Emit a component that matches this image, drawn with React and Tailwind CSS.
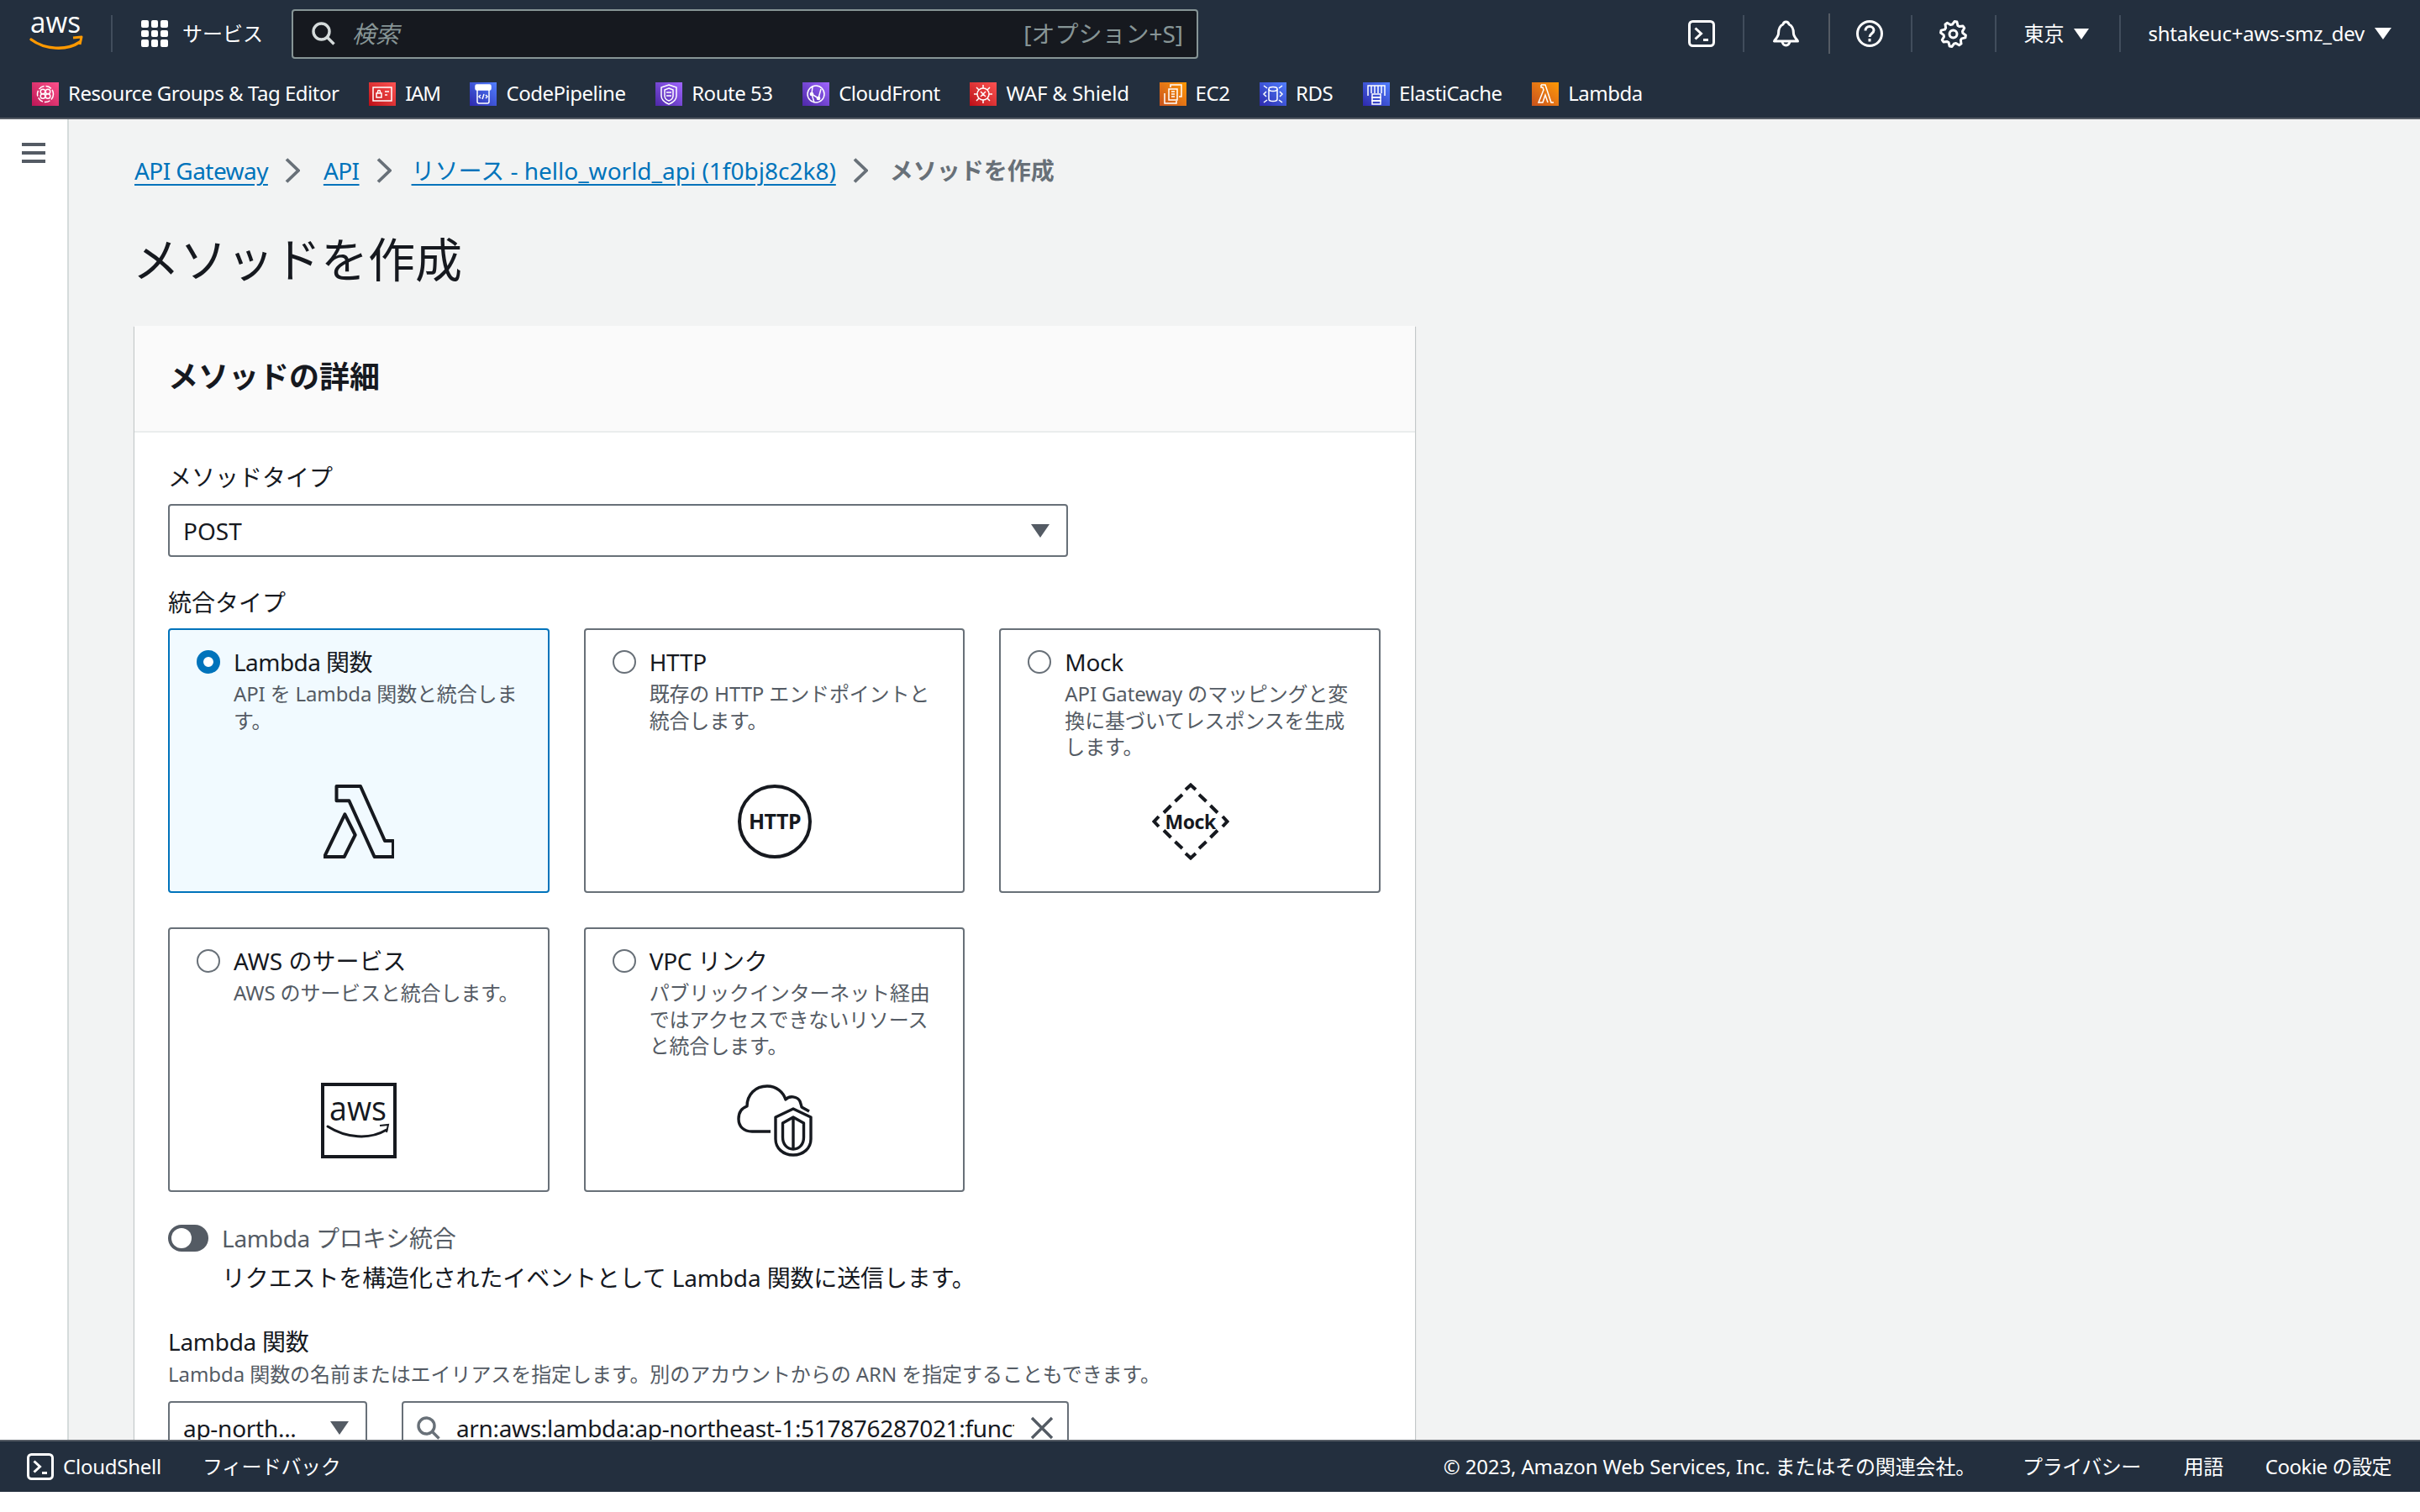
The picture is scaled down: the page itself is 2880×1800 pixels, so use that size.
const favorites = [
    { name: 'Resource Groups & Tag Editor', bg: 'from-[#bc1356] to-[#ff4f8b]', art: <><circle cx="16" cy="14" r="9.5" strokeDasharray="7 2" /><circle cx="13" cy="11" r="2.8" /><circle cx="19" cy="11" r="2.8" /><circle cx="13" cy="16.5" r="2.8" /><circle cx="19" cy="16.5" r="2.8" /></> },
    { name: 'IAM', tw: 'tracking-[-0.05em]', bg: 'from-[#bd0816] to-[#ff5252]', art: <><rect x="5" y="6" width="22" height="16" /><rect x="9" y="13" width="6" height="5" /><path d="M10.5 13v-2a1.5 1.5 0 0 1 3 0v2M19 11h5M19 15h3" /></> },
    { name: 'CodePipeline', bg: 'from-[#2e27ad] to-[#527fff]', art: <><rect x="7" y="3" width="18" height="6" rx="1.5" fill="#fff" /><path d="M9 9v14a2 2 0 0 0 2 2h10a2 2 0 0 0 2-2V9M13 15l-2 2 2 2M19 15l2 2-2 2M17 14l-2 6" /></> },
    { name: 'Route 53', bg: 'from-[#4d27a8] to-[#a166ff]', art: <><path d="M16 3l9 3v10c0 5-4 8-9 10-5-2-9-5-9-10V6z" /><path d="M16 7l5 2v7c0 3-2 5-5 6-3-1-5-3-5-6V9z" /><path d="M13 12h6M13 16h6" /></> },
    { name: 'CloudFront', bg: 'from-[#4d27a8] to-[#a166ff]', art: <><circle cx="16" cy="14" r="10" /><path d="M12 5l-1 9 8 5 3-11M11 14l3 10" /><circle cx="19" cy="19" r="1.6" fill="#fff" /><circle cx="11" cy="14" r="1.6" fill="#fff" /></> },
    { name: 'WAF & Shield', tw: 'tracking-[-0.005em]', bg: 'from-[#bd0816] to-[#ff5252]', art: <><circle cx="16" cy="14" r="7" /><path d="M16 3v4M16 21v4M5 14h4M23 14h4M8 6l3 3M24 6l-3 3M8 22l3-3M24 22l-3-3M13 11l6 6M19 11l-6 6" /></> },
    { name: 'EC2', bg: 'from-[#c8511b] to-[#ff9900]', art: <><path d="M13 6V3h13v14h-3M6 13v12h14v-3" /><rect x="11" y="8" width="10" height="13" /><path d="M14 11h4M14 14h4M14 17h4" /></> },
    { name: 'RDS', bg: 'from-[#2e27ad] to-[#527fff]', art: <><ellipse cx="16" cy="8" rx="5" ry="2.5" /><path d="M11 8v12c0 1.4 2.2 2.5 5 2.5s5-1.1 5-2.5V8M5 4l4 3M27 4l-4 3M5 24l4-3M27 24l-4-3M8 11l-3 3 3 3M24 11l3 3-3 3" /></> },
    { name: 'ElastiCache', bg: 'from-[#2e27ad] to-[#527fff]', art: <><path d="M6 16V4h20v12M10 4v9M14 4v9M18 4v9M22 4v9" /><rect x="11" y="14" width="10" height="4" /><rect x="11" y="18" width="10" height="4" /><rect x="11" y="22" width="10" height="4" /></> },
    { name: 'Lambda', bg: 'from-[#c8511b] to-[#ff9900]', art: <path d="M11 3h5l7 21h3M11 3v3h2l1 3-6 15h5l3-9 3 9" /> },
];

function Favorite({ name, bg, art, tw = 'tracking-[-0.02em]' }) {
    return (
        <div className="flex items-center gap-[11px]">
            <span className={`w-[32px] h-[28px] flex items-center justify-center bg-linear-to-tr ${bg}`}>
                <svg viewBox="0 0 32 28" className="w-[32px] h-[28px]" fill="none" stroke="#fff" strokeWidth="1.5">{art}</svg>
            </span>
            <span className={`-mt-[3px] text-[24px] leading-[32px] text-white whitespace-nowrap ${tw}`}>{name}</span>
        </div>
    );
}

function AwsLogo() {
    return (
        <svg viewBox="0 0 64 40" className="w-[64px] h-[40px] overflow-visible">
            <text x="31" y="19" textAnchor="middle" fill="#fff" className="text-[35px] font-['Open_Sans',sans-serif]" textLength="60" lengthAdjust="spacingAndGlyphs">aws</text>
            <path d="M2 27c16 12 42 14 58 3" fill="none" stroke="#ff9900" strokeWidth="3.4" strokeLinecap="round" />
            <path d="M52 25l10-1-2 9" fill="none" stroke="#ff9900" strokeWidth="3" strokeLinejoin="round" />
        </svg>
    );
}

function ConsoleIcon() {
    return (
        <svg viewBox="0 0 32 32" className="w-[32px] h-[32px]" fill="none" stroke="#fff" strokeWidth="3">
            <rect x="1.500" y="1.500" width="29" height="29" rx="4" />
            <path d="M8.500 9.500l7 6.500-7 6.500M18 23.500h6" />
        </svg>
    );
}

// eight rounded teeth, same as the console's gear
const gearPoints = Array.from({ length: 32 }, (_, i) => {
    const a = ((i - 0.5) * Math.PI) / 16 + Math.PI / 16;
    const r = i % 4 === 0 || i % 4 === 1 ? 15 : 11.5;
    return `${(16.5 + r * Math.cos(a)).toFixed(1)},${(16.5 + r * Math.sin(a)).toFixed(1)}`;
}).join(' ');

const GearIcon = () => (
    <svg viewBox="0 0 33 33" className="w-[33px] h-[33px]" fill="none" stroke="#fff" strokeWidth="3" strokeLinejoin="round">
        <polygon points={gearPoints} />
        <circle cx="16.500" cy="16.500" r="4.500" />
    </svg>
);

const Sep = ({ strong }) => <span className={`block w-[2px] ${strong ? 'h-[48px] bg-[#545b64]' : 'h-[44px] bg-[#414d5c]'}`} />;

const Caret = ({ className }) => (
    <svg viewBox="0 0 22 16" preserveAspectRatio="none" className={className}><path d="M0 0h22L11 16z" fill="currentColor" /></svg>
);

const SearchIcon = ({ className }) => (
    <svg viewBox="0 0 28 28" className={className} fill="none" stroke="currentColor" strokeWidth="3.400">
        <circle cx="11.500" cy="11.500" r="9.500" />
        <path d="M18 18l8.500 8.500" />
    </svg>
);

const Crumb = ({ className = 'mr-[22px]' }) => (
    <svg viewBox="0 0 18 30" className={`w-[18px] h-[30px] shrink-0 ml-[20px] ${className}`} fill="none" stroke="#687078" strokeWidth="3.800">
        <path d="M2 1.500L16 15 2 28.500" />
    </svg>
);

function Radio({ checked }) {
    return checked ? (
        <span className="w-[28px] h-[28px] rounded-full border-[8px] border-[#0073bb] bg-white shrink-0" />
    ) : (
        <span className="w-[28px] h-[28px] rounded-full border-[2px] border-[#687078] bg-white shrink-0" />
    );
}

const LambdaArt = () => (
    <svg viewBox="0 0 84 88" className="w-[84px] h-[88px]" fill="none" stroke="#16191f" strokeWidth="4" strokeLinejoin="round">
        <path d="M15.500 2H44L73 67h10v19H60.600L30.400 19.300H15.500z" />
        <path d="M25.400 35.300L37.700 60 24.700 86H1z" />
    </svg>
);

const HttpArt = () => (
    <div className="w-[88px] h-[88px] rounded-full border-[4px] border-[#16191f] flex items-center justify-center text-[25px] tracking-[-0.02em] font-bold text-[#16191f]">HTTP</div>
);

const MockArt = () => (
    <div className="relative w-[92px] h-[92px] flex items-center justify-center text-[23px] tracking-[-0.02em] font-bold text-[#16191f]">
        <svg viewBox="0 0 92 92" className="absolute inset-0 w-[92px] h-[92px]" fill="none" stroke="#16191f" strokeWidth="4">
            <path d="M40 8l6-5.500L52 8M40 84l6 5.500L52 84M8 40l-5.500 6L8 52M84 40l5.500 6L84 52" />
            <path d="M27.500 22L36 14M14 35.500L22.500 27M64.500 22L56 14M78 35.500L69.500 27" />
            <path d="M27.500 70L36 78M14 56.500L22.500 65M64.500 70L56 78M78 56.500L69.500 65" />
        </svg>
        <span className="relative">Mock</span>
    </div>
);

const AwsArt = () => (
    <div className="w-[90px] h-[90px] border-[4px] border-[#16191f] flex flex-col items-center">
        <svg viewBox="0 0 82 82" className="w-[82px] h-[82px] overflow-visible">
            <text x="40" y="41" textAnchor="middle" fill="#16191f" className="text-[41px] font-['Open_Sans',sans-serif]" textLength="68" lengthAdjust="spacingAndGlyphs">aws</text>
            <path d="M4 48c22 14 50 16 70 4" fill="none" stroke="#16191f" strokeWidth="3" strokeLinecap="round" />
            <path d="M66 47l10-1-2 9" fill="none" stroke="#16191f" strokeWidth="2" />
        </svg>
    </div>
);

const VpcArt = () => (
    <svg viewBox="0 0 90 86" className="w-[90px] h-[86px]" fill="none" stroke="#16191f" strokeWidth="3.400" strokeLinejoin="round">
        <path d="M40 56H18C8 56 2 50 2 41c0-8 4-13 10-15C12 12 22 2 36 2c11 0 19 7 22 16 4-5 14-4 17 2 1 3 2 6 2 7l9 5" />
        <path d="M67 29l21 10v26c0 11-9 19-21 19s-21-8-21-19V39z" fill="#fff" />
        <path d="M67 39l12.500 7v17c0 8-5 14-12.500 14S54.500 71 54.500 63V46zM67 39v38" />
    </svg>
);

const integrations = [
    { title: 'Lambda 関数', tw: 'tracking-[-0.02em]', desc: 'API を Lambda 関数と統合します。', art: <LambdaArt />, checked: true },
    { title: 'HTTP', desc: '既存の HTTP エンドポイントと統合します。', art: <HttpArt /> },
    { title: 'Mock', desc: 'API Gateway のマッピングと変換に基づいてレスポンスを生成します。', art: <MockArt /> },
    { title: 'AWS のサービス', tw: 'tracking-normal', desc: 'AWS のサービスと統合します。', art: <AwsArt /> },
    { title: 'VPC リンク', desc: 'パブリックインターネット経由ではアクセスできないリソースと統合します。', art: <VpcArt /> },
];

function IntegrationCard({ title, desc, art, checked, tw = 'tracking-[-0.01em]' }) {
    return (
        <div className={`h-[315px] rounded-[4px] border-[2px] pt-[24px] pl-[32px] pr-[24px] flex flex-col ${checked ? 'border-[#0073bb] bg-[#f1faff]' : 'border-[#687078] bg-white'}`}>
            <div className="h-[160px] flex gap-[16px]">
                <Radio checked={checked} />
                <div>
                    <div className={`text-[28px] leading-[28px] text-[#16191f] ${tw}`}>{title}</div>
                    <div className="mt-[8px] text-[24px] tracking-[-0.006em] leading-[31.500px] text-[#545b64]">{desc}</div>
                </div>
            </div>
            <div className="h-[88px] flex items-center justify-center -ml-[7px]">{art}</div>
        </div>
    );
}

export default function App() {
    return (
        <div className="h-[1776px] flex flex-col overflow-hidden bg-[#f2f3f3] text-[#16191f] font-['Noto_Sans','Noto_Sans_CJK_JP',sans-serif]">
            <header className="h-[142px] shrink-0 bg-[#232f3e] border-b-[2px] border-[#545b64]">
                <div className="h-[80px] flex items-center">
                    <div className="ml-[35px] w-[64px]"><AwsLogo /></div>
                    <span className="ml-[33px] mr-[34px] w-[2px] h-[44px] bg-[#414d5c]" />
                    <div className="grid grid-cols-3 gap-[3px] w-[32px] h-[32px]">
                        {Array.from({ length: 9 }).map((_, i) => <span key={i} className="rounded-[2px] bg-white" />)}
                    </div>
                    <span className="ml-[17px] w-[96px] text-[24px] text-white whitespace-nowrap">サービス</span>
                    <div className="ml-[34px] w-[1079px] h-[59px] rounded-[4px] border-[2px] border-[#879596] bg-[#16191f] flex items-center pl-[22px] pr-[16px]">
                        <SearchIcon className="w-[28px] h-[28px] text-[#d5dbdb]" />
                        <span className="ml-[20px] italic text-[28px] text-[#879596]">検索</span>
                        <span className="ml-auto text-[28px] text-[#879596]">[オプション+S]</span>
                    </div>
                    <div className="ml-auto flex items-center text-white">
                        <ConsoleIcon />
                        <span className="ml-[33px] mr-[33px]"><Sep /></span>
                        <svg viewBox="0 0 32 32" className="w-[33px] h-[32px]" fill="none" stroke="#fff" strokeWidth="3" strokeLinejoin="round">
                            <path d="M16 2c-2 0-3 1-3.500 3C8 7 7 12 7 16c0 3-3 6-5 9h28c-2-3-5-6-5-9 0-4-1-9-5.500-11C19 3 18 2 16 2z" />
                            <path d="M11.500 25a4.500 5 0 0 0 9 0" />
                        </svg>
                        <span className="ml-[34px] mr-[31px]"><Sep strong /></span>
                        <svg viewBox="0 0 32 32" className="w-[32px] h-[32px]" fill="none" stroke="#fff" strokeWidth="3">
                            <circle cx="16" cy="16" r="14.500" />
                            <path d="M11 12.500c0-3 2.200-5 5-5s5 2 5 4.500c0 4-5 4-5 8M16 22v3.500" />
                        </svg>
                        <span className="ml-[33px] mr-[32px]"><Sep /></span>
                        <GearIcon />
                        <span className="ml-[33px] mr-[32px]"><Sep /></span>
                        <span className="text-[24px] whitespace-nowrap">東京</span>
                        <Caret className="ml-[12px] w-[18px] h-[13px]" />
                        <span className="ml-[36px] mr-[32px]"><Sep /></span>
                        <span className="text-[24px] tracking-[-0.01em] whitespace-nowrap">shtakeuc+aws-smz_dev</span>
                        <Caret className="ml-[12px] mr-[34px] w-[20px] h-[14px]" />
                    </div>
                </div>
                <div className="h-[60px] pt-[4px] pl-[38px] flex items-center gap-[35.700px]">
                    {favorites.map((f) => <Favorite key={f.name} {...f} />)}
                </div>
            </header>

            <div className="flex-1 min-h-0 flex">
                <aside className="w-[82px] shrink-0 bg-white border-r-[2px] border-[#d5dbdb] pt-[28px] pl-[26px]">
                    <div className="w-[28px] flex flex-col gap-[6px]">
                        <span className="h-[4px] bg-[#545b64]" />
                        <span className="h-[4px] bg-[#545b64]" />
                        <span className="h-[4px] bg-[#545b64]" />
                    </div>
                </aside>

                <main className="flex-1 min-w-0 pl-[78px] pt-[41px]">
                    <nav className="h-[40px] flex items-center text-[28px] whitespace-nowrap">
                        <a className="text-[#0073bb] tracking-[-0.02em] underline decoration-2 underline-offset-[5px]">API Gateway</a>
                        <Crumb className="mr-[28px]" />
                        <a className="text-[#0073bb] tracking-[-0.02em] underline decoration-2 underline-offset-[5px]">API</a>
                        <Crumb className="mr-[24px]" />
                        <a className="text-[#0073bb] underline decoration-2 underline-offset-[5px]">リソース - hello_world_api (1f0bj8c2k8)</a>
                        <Crumb className="mr-[26px]" />
                        <span className="font-bold text-[#687078]">メソッドを作成</span>
                    </nav>
                    <h1 className="mt-[49px] -ml-[2px] text-[56px] leading-[72px] font-normal text-[#16191f]">メソッドを作成</h1>

                    <section className="mt-[44px] w-[1524px] bg-white shadow-[0_1px_1px_0_rgba(0,28,36,0.3),1px_1px_1px_0_rgba(0,28,36,0.15),-1px_1px_1px_0_rgba(0,28,36,0.15)]">
                        <div className="h-[127px] bg-[#fafafa] border-b-[2px] border-[#eaeded] pl-[40px] pb-[4px] flex items-center">
                            <h2 className="text-[36px] font-bold">メソッドの詳細</h2>
                        </div>
                        <div className="pl-[40px] pt-[33px]">
                            <div className="text-[28px] leading-[40px]">メソッドタイプ</div>
                            <div className="mt-[12px] w-[1071px] h-[63px] rounded-[4px] border-[2px] border-[#687078] flex items-center pl-[16px] pr-[20px] text-[28px]">
                                POST
                                <Caret className="ml-auto w-[22px] h-[16px] text-[#545b64]" />
                            </div>
                            <div className="mt-[34px] text-[28px] leading-[40px]">統合タイプ</div>
                            <div className="mt-[11px] w-[1443px] grid grid-cols-3 gap-[41px]">
                                {integrations.map((c) => <IntegrationCard key={c.title} {...c} />)}
                            </div>
                            <div className="mt-[39px] flex items-center gap-[16px]">
                                <span className="w-[48px] h-[32px] rounded-full bg-[#545b64] flex items-center pl-[4px]">
                                    <span className="w-[24px] h-[24px] rounded-full bg-white" />
                                </span>
                                <span className="text-[28px] tracking-[-0.01em] leading-[32px] text-[#545b64]">Lambda プロキシ統合</span>
                            </div>
                            <div className="mt-[11px] ml-[64px] text-[28px] tracking-[-0.005em] leading-[40px]">リクエストを構造化されたイベントとして Lambda 関数に送信します。</div>
                            <div className="mt-[36px] text-[28px] tracking-[-0.01em] leading-[40px]">Lambda 関数</div>
                            <div className="mt-[1px] text-[24px] tracking-[-0.003em] leading-[36px] text-[#545b64]">Lambda 関数の名前またはエイリアスを指定します。別のアカウントからの ARN を指定することもできます。</div>
                            <div className="mt-[14px] flex gap-[41px]">
                                <div className="w-[237px] h-[63px] rounded-[4px] border-[2px] border-[#687078] flex items-center pl-[16px] pr-[20px] text-[28px] tracking-[-0.01em]">
                                    ap-north...
                                    <Caret className="ml-auto w-[22px] h-[16px] text-[#545b64]" />
                                </div>
                                <div className="w-[794px] h-[63px] rounded-[4px] border-[2px] border-[#687078] flex items-center pl-[16px] pr-[16px] text-[28px]">
                                    <SearchIcon className="w-[28px] h-[28px] shrink-0 text-[#687078]" />
                                    <span className="ml-[19px] w-[664px] overflow-hidden whitespace-nowrap tracking-[-0.012em]">arn:aws:lambda:ap-northeast-1:517876287021:function:hello_world</span>
                                    <svg viewBox="0 0 28 28" className="ml-auto w-[28px] h-[28px] shrink-0" fill="none" stroke="#545b64" strokeWidth="3.400">
                                        <path d="M2 2l24 24M26 2L2 26" />
                                    </svg>
                                </div>
                            </div>
                        </div>
                    </section>
                </main>
            </div>

            <footer className="h-[62px] shrink-0 bg-[#232f3e] border-t-[2px] border-[#545b64] flex items-center text-[24px] tracking-[-0.02em] text-white whitespace-nowrap">
                <span className="ml-[32px]"><ConsoleIcon /></span>
                <span className="ml-[11px] tracking-[-0.01em]">CloudShell</span>
                <span className="ml-[49px]">フィードバック</span>
                <span className="ml-auto tracking-[-0.006em]">© 2023, Amazon Web Services, Inc. またはその関連会社。</span>
                <span className="ml-[56px]">プライバシー</span>
                <span className="ml-[51px]">用語</span>
                <span className="ml-[50px] mr-[34px]">Cookie の設定</span>
            </footer>
        </div>
    );
}
